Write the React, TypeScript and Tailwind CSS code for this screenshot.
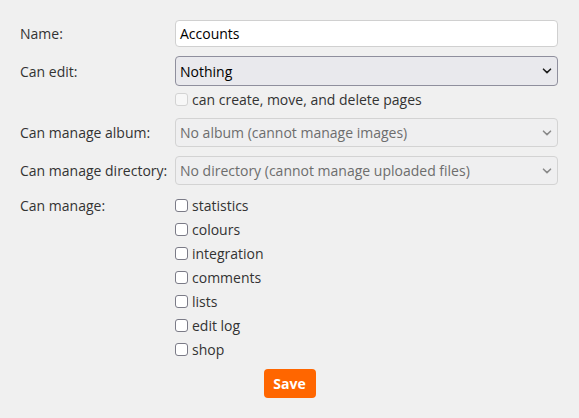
import React from "react";

const Chevron = ({ color }: { color: string }) => (
  <svg width="10" height="6" viewBox="0 0 10 6" className="shrink-0">
    <path d="M1.5 1.2 L5 4.6 L8.5 1.2" fill="none" stroke={color} strokeWidth="1.6" strokeLinecap="round" strokeLinejoin="round" />
  </svg>
);

const Box = ({ disabled }: { disabled?: boolean }) => (
  <span
    className={
      disabled
        ? "inline-block w-[13px] h-[13px] rounded-[3px] border border-[#d3d3d3] bg-[#f7f7f7] shrink-0"
        : "inline-block w-[13px] h-[13px] rounded-[3px] border border-[#7b7b87] bg-white shrink-0"
    }
  />
);

const items = ["statistics", "colours", "integration", "comments", "lists", "edit log", "shop"];

export default function App() {
  return (
    <div
      className="w-[579px] h-[418px] bg-[#f0f0f0] text-[14px] text-[#333333] pt-5 pl-5"
      style={{ fontFamily: '"Open Sans", "Noto Sans", sans-serif' }}
    >
      <div className="grid grid-cols-[155px_383px]">
        <div className="h-[27px] flex items-center">Name:</div>
        <div className="h-[27px] rounded-[4px] border border-[#d0d0d0] bg-white flex items-center px-[4px] text-black">
          Accounts
        </div>

        <div className="h-[30px] mt-[9px] flex items-center">Can edit:</div>
        <div className="h-[30px] mt-[9px] rounded-[4px] border border-[#8f8f9d] bg-[#e9e9ed] flex items-center justify-between pl-[4px] pr-[5px] text-black">
          <span>Nothing</span>
          <Chevron color="#1f1f1f" />
        </div>

        <div className="mt-[3px]" />
        <div className="mt-[3px] h-[20px] flex items-center gap-[4px]">
          <Box disabled />
          <span>can create, move, and delete pages</span>
        </div>

        <div className="h-[29px] mt-[9px] flex items-center">Can manage album:</div>
        <div className="h-[29px] mt-[9px] rounded-[4px] border border-[#d3d3d3] bg-[#efeff0] flex items-center justify-between pl-[4px] pr-[5px] text-[#6d6d6d]">
          <span>No album (cannot manage images)</span>
          <Chevron color="#8a8a8a" />
        </div>

        <div className="h-[29px] mt-[9px] flex items-center">Can manage directory:</div>
        <div className="h-[29px] mt-[9px] rounded-[4px] border border-[#d3d3d3] bg-[#efeff0] flex items-center justify-between pl-[4px] pr-[5px] text-[#6d6d6d]">
          <span>No directory (cannot manage uploaded files)</span>
          <Chevron color="#8a8a8a" />
        </div>

        <div className="mt-[8px] h-[24px] flex items-center self-start">Can manage:</div>
        <div className="mt-[8px] flex flex-col">
          {items.map((it) => (
            <div key={it} className="h-[24px] flex items-center gap-[4px]">
              <Box />
              <span>{it}</span>
            </div>
          ))}
        </div>
      </div>
      <div className="flex justify-center pr-5 mt-[8px]">
        <button className="w-[52px] h-[29px] rounded-[4px] bg-[#ff6600] text-white font-bold text-[14px] flex items-center justify-center">
          Save
        </button>
      </div>
    </div>
  );
}
